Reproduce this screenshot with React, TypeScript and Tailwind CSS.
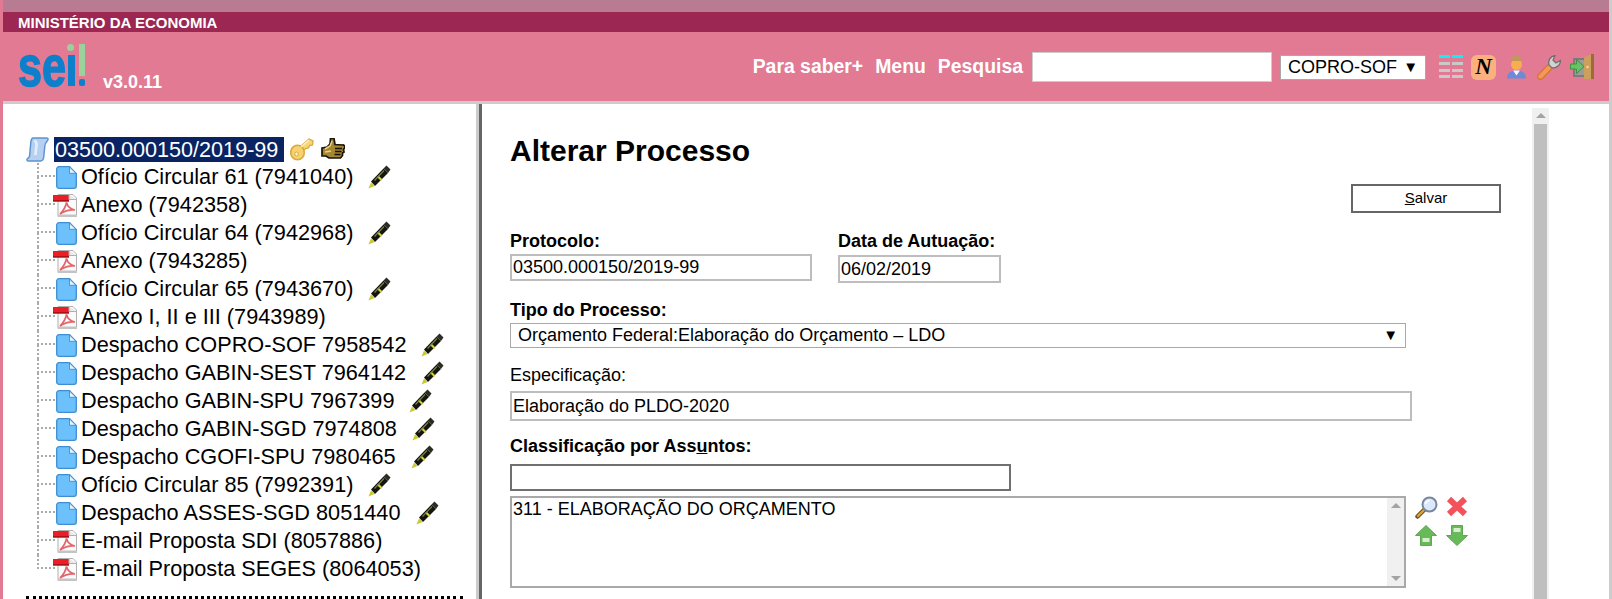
import type { ReactNode } from "react"

const arial = "font-['Liberation_Sans',Arial,sans-serif]"

function DocIcon() {
  return (
    <svg width="21" height="23" viewBox="0 0 21 23" className="shrink-0">
      <path d="M3 .7h10.500l6.800 6.800V20a2.300 2.300 0 0 1-2.300 2.300H3A2.300 2.300 0 0 1 .7 20V3A2.300 2.300 0 0 1 3 .7z" fill="#6cc0fb" stroke="#3d8fd2" strokeWidth="1.300" />
      <path d="M13.500 1v6.300h6.500z" fill="#e6f4ff" stroke="#3d8fd2" strokeWidth="0.900" />
    </svg>
  )
}

function PdfIcon() {
  return (
    <svg width="24" height="23" viewBox="0 0 24 23" className="shrink-0">
      <path d="M5 .5h15l3.500 3.500v18.500H5z" fill="#fbfbfb" stroke="#b0b0b0" />
      <rect x="5" y="20.500" width="19" height="2.500" fill="#c4c4c4" />
      <rect x="0" y="1" width="16" height="6.500" fill="#ee1c25" />
      <rect x="0" y="6" width="16" height="1.500" fill="#a81218" />
      <path d="M16 .5v5h7.500" fill="#e8e8e8" stroke="#b0b0b0" />
      <path d="M7 20c2.800-2.500 5.500-6.500 6.500-11.500 1 4 4 6.500 8.500 7.500-5.500-.5-10.500 1-15 4z" fill="none" stroke="#e4666b" strokeWidth="1.700" />
    </svg>
  )
}

function PenIcon() {
  return (
    <svg width="23" height="24" viewBox="0 0 23 24">
      <path d="M.5 23.500l2.500-6 3.500 3.500z" fill="#c9c82c" />
      <path d="M3 16.500L15.500 3.500l4.500 4.500L7 21z" fill="#15150f" />
      <path d="M9 12l1.500-1.500 4 4L13 16z" fill="#d4d233" />
      <path d="M15.500 3.500l3-3 4 4-2.500 3.500z" fill="#2c2c22" />
      <path d="M6.500 15.500L16 5.500" stroke="#7f8048" strokeWidth="1.100" />
    </svg>
  )
}

function KeyIcon() {
  return (
    <svg width="24" height="24" viewBox="0 0 24 24">
      <path d="M9 11L19 2l4 2-.5 4-3 .5-1 2.500-3 .5-3.500 4z" fill="#f6d677" stroke="#dba83f" strokeWidth="1.300" />
      <ellipse cx="7.500" cy="15.500" rx="6.800" ry="7.200" fill="#f7d370" stroke="#dba83f" strokeWidth="1.600" />
      <ellipse cx="6.500" cy="17" rx="1.800" ry="2" fill="#fff6d8" stroke="#dba83f" />
      <path d="M11 10l8-7" stroke="#fff3c4" strokeWidth="1.500" />
    </svg>
  )
}

function HandIcon() {
  return (
    <svg width="24" height="22" viewBox="0 0 24 22">
      <path d="M1 10l5-1 3-3 .5-5.500 3.500 0 1 6 7.500.5a2 2 0 0 1 2 3l-1 1.500.5 2.500-1.500 1 0 2.500-2 2.500H8l-3-2H1z" fill="#a58632" stroke="#17130a" strokeWidth="1.700" />
      <path d="M14 10.500h7M14 13.500h6.500M13.500 16.500h6" stroke="#17130a" strokeWidth="1.500" />
      <path d="M4 11l5-3 2-5M4 14l6-1" stroke="#ecd27c" strokeWidth="1.500" fill="none" />
    </svg>
  )
}

function ScrollIcon() {
  return (
    <svg width="25" height="25" viewBox="0 0 22 24" className="shrink-0">
      <path d="M7 1h13c1.500 0 1.500 1.500.5 2.500-1.500 1.500-2.500 3-2.500 5.500l-1 10c-.2 2.500-1 4-3 4H2c-1.500 0-1.500-2-.5-2.500C3 20 3.500 18.500 3.500 17l1-11C4.700 3 5 1 7 1z" fill="#b5d0f1" stroke="#5e92d0" strokeWidth="1.400" />
      <path d="M8 3.500c2 1 2.500 3 2 5l-1 9" stroke="#e4effb" strokeWidth="2.500" fill="none" />
    </svg>
  )
}

function ListIcon() {
  return (
    <svg width="24" height="24" viewBox="0 0 24 24">
      {[0, 13].map((x) => (
        <g key={x}>
          <rect x={x} y="0" width="11" height="3" fill="#0ff0f5" />
          <rect x={x} y="7" width="11" height="3" fill="#c9c9c9" />
          <rect x={x} y="14" width="11" height="3" fill="#c9c9c9" />
          <rect x={x} y="20" width="11" height="3" fill="#c9c9c9" />
        </g>
      ))}
    </svg>
  )
}

function UserIcon() {
  return (
    <svg width="19" height="24" viewBox="0 0 19 24">
      <path d="M0 23.500c0-5 3-8 9.500-8s9.500 3 9.500 8z" fill="#6c8ad8" />
      <path d="M6 15.500l3.500 5 3.500-5z" fill="#f2f6ff" />
      <circle cx="9.500" cy="9.500" r="5.500" fill="#f8ad4e" />
      <path d="M4.500 6c.3-3.500 2.500-5.500 5-5.500s4.700 2 5 5.500z" fill="#c2985a" />
    </svg>
  )
}

function WrenchIcon() {
  return (
    <svg width="24" height="25" viewBox="0 0 24 25">
      <path d="M1.500 19.500L11.500 9l4 4L5.500 23.500a2.800 2.800 0 0 1-4-4z" fill="#f2985b" stroke="#d6752f" strokeWidth="1.200" />
      <path d="M12 10c-1-4.500 1-8.500 6-9.500l-2 4.500 3 3 4.500-2.500c0 5.500-6 8.500-9 7z" fill="#d2d2d2" stroke="#6e6e6e" strokeWidth="1.300" />
    </svg>
  )
}

function ExitIcon() {
  return (
    <svg width="24" height="26" viewBox="0 0 24 26">
      <rect x="3" y="4" width="13" height="19" fill="#7c7c7c" />
      <rect x="5" y="6" width="9" height="15" fill="#9b9b9b" />
      <path d="M14 25V3l9-3v25z" fill="#cd9f5f" />
      <rect x="21" y="0" width="3" height="25" fill="#9b6c33" />
      <circle cx="17.500" cy="13" r="1.200" fill="#f4dc8a" />
      <path d="M.5 10h6V5.500l7.500 7-7.500 7V15h-6z" fill="#68c268" stroke="#41903f" />
    </svg>
  )
}

function SearchIcon() {
  return (
    <svg width="23" height="23" viewBox="0 0 23 23">
      <path d="M2.500 20.500l7-7" stroke="#6e5a2e" strokeWidth="4.500" strokeLinecap="round" />
      <path d="M3 20l6-6" stroke="#e0a63b" strokeWidth="2" strokeLinecap="round" />
      <circle cx="14.500" cy="8.500" r="7" fill="#dce9fb" stroke="#76869e" strokeWidth="2" />
      <path d="M10.500 8c.5-2 2-3.500 4-3.500" stroke="#fff" strokeWidth="1.500" fill="none" />
    </svg>
  )
}

function CrossIcon() {
  return (
    <svg width="22" height="21" viewBox="0 0 22 21">
      <path d="M3 3l16 15M19 3L3 18" stroke="#f4525b" strokeWidth="6" />
    </svg>
  )
}

function ArrowIcon({ up }: { up: boolean }) {
  return (
    <svg width="22" height="21" viewBox="0 0 22 21">
      <path d={up ? "M11 .5L21.500 10.500H16.500V20.500H5.500V10.500H.5z" : "M5.500 .5H16.500V10.500H21.500L11 20.500.5 10.500H5.500z"} fill="#68b95a" stroke="#5ea851" />
      <rect x="7.500" y={up ? 13 : 3} width="7" height="4" fill="#d6f0cd" />
    </svg>
  )
}

function Logo() {
  return (
    <svg width="68" height="70" viewBox="0 -14 68 70">
      <text
        x="0"
        y="42"
        fontFamily="Liberation Sans"
        fontWeight="bold"
        fontSize="58"
        textLength="48"
        lengthAdjust="spacingAndGlyphs"
        fill="#0e80cb"
        stroke="#0e80cb"
        strokeWidth="1.500"
      >
        se
      </text>
      <rect x="50" y="11" width="7" height="31" fill="#0e80cb" />
      <circle cx="52.500" cy="3.500" r="3.500" fill="#9bd29b" />
      <rect x="61" y="0" width="6" height="32" fill="#9bd29b" />
      <rect x="61" y="35" width="6" height="7" rx="2" fill="#0e80cb" />
    </svg>
  )
}

const rows = [
  { label: "Ofício Circular 61 (7941040)", pdf: false, pen: true },
  { label: "Anexo (7942358)", pdf: true, pen: false },
  { label: "Ofício Circular 64 (7942968)", pdf: false, pen: true },
  { label: "Anexo (7943285)", pdf: true, pen: false },
  { label: "Ofício Circular 65 (7943670)", pdf: false, pen: true },
  { label: "Anexo I, II e III (7943989)", pdf: true, pen: false },
  { label: "Despacho COPRO-SOF 7958542", pdf: false, pen: true },
  { label: "Despacho GABIN-SEST 7964142", pdf: false, pen: true },
  { label: "Despacho GABIN-SPU 7967399", pdf: false, pen: true },
  { label: "Despacho GABIN-SGD 7974808", pdf: false, pen: true },
  { label: "Despacho CGOFI-SPU 7980465", pdf: false, pen: true },
  { label: "Ofício Circular 85 (7992391)", pdf: false, pen: true },
  { label: "Despacho ASSES-SGD 8051440", pdf: false, pen: true },
  { label: "E-mail Proposta SDI (8057886)", pdf: true, pen: false },
  { label: "E-mail Proposta SEGES (8064053)", pdf: true, pen: false },
]

function Tree() {
  return (
    <div className="w-[473px] shrink-0 pl-[22px] pr-[13px] pt-[32px] flex flex-col">
      <div className="flex items-center h-[26px] mb-[1px]">
        <ScrollIcon />
        <span className="ml-[4px] w-[230px] pl-[1px] h-[25px] leading-[25px] text-[21.6px] bg-[#0a2463] text-white">
          03500.000150/2019-99
        </span>
        <span className="ml-[6px]"><KeyIcon /></span>
        <span className="ml-[7px]"><HandIcon /></span>
      </div>
      {rows.map((row, i) => (
        <div key={row.label} className="flex items-center h-[28px] pl-[12px] text-[21.7px] text-black">
          <div className="w-[18px] h-[28px] shrink-0 flex flex-col">
            <div className="h-[14px] border-l-2 border-b-2 border-dotted border-[#aaa]" />
            {i < rows.length - 1 && <div className="h-[14px] border-l-2 border-dotted border-[#aaa]" />}
          </div>
          {row.pdf ? (
            <span className="ml-[-2px]"><PdfIcon /></span>
          ) : (
            <span className="ml-[1px]"><DocIcon /></span>
          )}
          <span className={row.pdf ? "ml-[4px] whitespace-nowrap" : "ml-[4px] whitespace-nowrap"}>{row.label}</span>
          {row.pen && <span className="ml-[15px]"><PenIcon /></span>}
        </div>
      ))}
      <div className="mt-[13px] ml-[1px] border-t-[3px] border-dotted border-black" />
    </div>
  )
}

function Label({ children }: { children: ReactNode }) {
  return <div className="text-[18px] leading-[20px] font-bold text-black">{children}</div>
}

function Form() {
  return (
    <div className="flex-1 flex min-w-0">
      <div className="w-[1050px] pl-[28px] shrink-0">
        <h1 className="mt-[29px] text-[30px] leading-[36px] font-bold text-black">Alterar Processo</h1>
        <div className="flex justify-end pr-[31px] mt-[15px]">
          <button className="w-[150px] h-[29px] border-2 border-[#666] text-[15px] bg-white text-black">
            <span className="underline">S</span>alvar
          </button>
        </div>
        <div className="flex mt-[18px]">
          <div className="w-[328px]">
            <Label>Protocolo:</Label>
            <input
              readOnly
              value="03500.000150/2019-99"
              className="mt-[3px] block w-[302px] h-[27px] border-2 border-[#bdbdbd] px-[1px] text-[18px] text-black"
            />
          </div>
          <div>
            <Label>Data de Autuação:</Label>
            <input
              readOnly
              value="06/02/2019"
              className="mt-[4px] block w-[163px] h-[28px] border-2 border-[#bdbdbd] px-[1px] text-[18px] text-black"
            />
          </div>
        </div>
        <div className="mt-[17px]"><Label>Tipo do Processo:</Label></div>
        <div className="mt-[3px] w-[896px] h-[25px] border border-[#a9a9a9] flex items-center justify-between pl-[7px] pr-[7px] text-[18px] text-black">
          <span>Orçamento Federal:Elaboração do Orçamento – LDO</span>
          <span className="text-[15px]">▼</span>
        </div>
        <div className="mt-[17px] text-[18px] leading-[20px] text-black">Especificação:</div>
        <input
          readOnly
          value="Elaboração do PLDO-2020"
          className="mt-[6px] block w-[902px] h-[30px] border-2 border-[#bdbdbd] px-[1px] text-[18px] text-black"
        />
        <div className="mt-[15px]"><Label>Classificação por Ass<span className="underline">u</span>ntos:</Label></div>
        <input readOnly value="" className="mt-[8px] block w-[501px] h-[27px] border-2 border-[#707070]" />
        <div className="mt-[5px] flex">
          <div className="w-[896px] h-[92px] border-2 border-[#a9a9a9] flex justify-between">
            <div className="pl-[1px] pt-[1px] text-[18px] leading-[20px] text-black">311 - ELABORAÇÃO DO ORÇAMENTO</div>
            <div className="w-[17px] h-full bg-[#f0f0f0] flex flex-col items-center justify-between py-[5px] shrink-0">
              <span className="w-0 h-0 border-x-[5px] border-x-transparent border-b-[5px] border-b-[#a3a3a3]" />
              <span className="w-0 h-0 border-x-[5px] border-x-transparent border-t-[5px] border-t-[#a3a3a3]" />
            </div>
          </div>
          <div className="ml-[9px] grid grid-cols-[23px_22px] gap-x-[8px] gap-y-[6px] h-fit">
            <SearchIcon />
            <CrossIcon />
            <ArrowIcon up />
            <ArrowIcon up={false} />
          </div>
        </div>
      </div>
      <div className="w-[17px] shrink-0 mt-[4px] bg-[#f0f0f0] flex flex-col items-center">
        <span className="mt-[5px] w-0 h-0 border-x-[5px] border-x-transparent border-b-[5px] border-b-[#a3a3a3]" />
        <div className="mt-[6px] w-[13px] flex-1 bg-[#bfbfbf]" />
      </div>
    </div>
  )
}

export default function App() {
  return (
    <div className={arial + " h-[599px] overflow-hidden bg-white flex flex-col border-l-[3px] border-l-[#e27a94] border-r-[3px] border-r-[#ccc]"}>
      <div className="h-[12px] shrink-0 bg-gradient-to-b from-[#b67c92] to-[#bb7a92] -ml-[3px] -mr-[3px]" />
      <div className="h-[20px] shrink-0 bg-[#9c2752] pl-[15px] text-[15px] leading-[22px] font-bold text-white">
        MINISTÉRIO DA ECONOMIA
      </div>
      <div className="h-[69px] shrink-0 bg-[#e27a94] flex items-start pl-[15px] pr-[15px]">
        <div className="mt-[-2px]"><Logo /></div>
        <span className="ml-[17px] mt-[40px] text-[18px] leading-[20px] font-bold text-white">v3.0.11</span>
        <div className="ml-auto mt-[20px] flex items-center">
          <span className="text-[19.4px] font-bold text-white">Para saber+</span>
          <span className="ml-[12px] text-[19.4px] font-bold text-white">Menu</span>
          <span className="ml-[12px] text-[19.4px] font-bold text-white">Pesquisa</span>
          <input readOnly value="" className="ml-[9px] w-[240px] h-[30px] bg-white border border-[#ccc]" />
          <div className="ml-[8px] w-[146px] h-[25px] bg-white border border-[#a9a9a9] flex items-center justify-between pl-[7px] pr-[7px] text-[18px] text-black">
            <span>COPRO-SOF</span>
            <span className="text-[15px]">▼</span>
          </div>
          <div className="ml-[13px] flex items-center">
            <ListIcon />
            <div className="ml-[8px] w-[25px] h-[25px] rounded-[6px] bg-[#fbb07f] flex items-center justify-center font-['Liberation_Serif',serif] font-bold italic text-[23px] text-black">
              N
            </div>
            <span className="ml-[11px] flex"><UserIcon /></span>
            <span className="ml-[11px] flex"><WrenchIcon /></span>
            <span className="ml-[9px] flex"><ExitIcon /></span>
          </div>
        </div>
      </div>
      <div className="h-[3px] shrink-0 bg-[#ccc]" />
      <div className="flex-1 flex min-h-0">
        <Tree />
        <div className="w-[3px] shrink-0 bg-[#ccc]" />
        <div className="w-[3px] shrink-0 bg-[#666]" />
        <Form />
      </div>
    </div>
  )
}
